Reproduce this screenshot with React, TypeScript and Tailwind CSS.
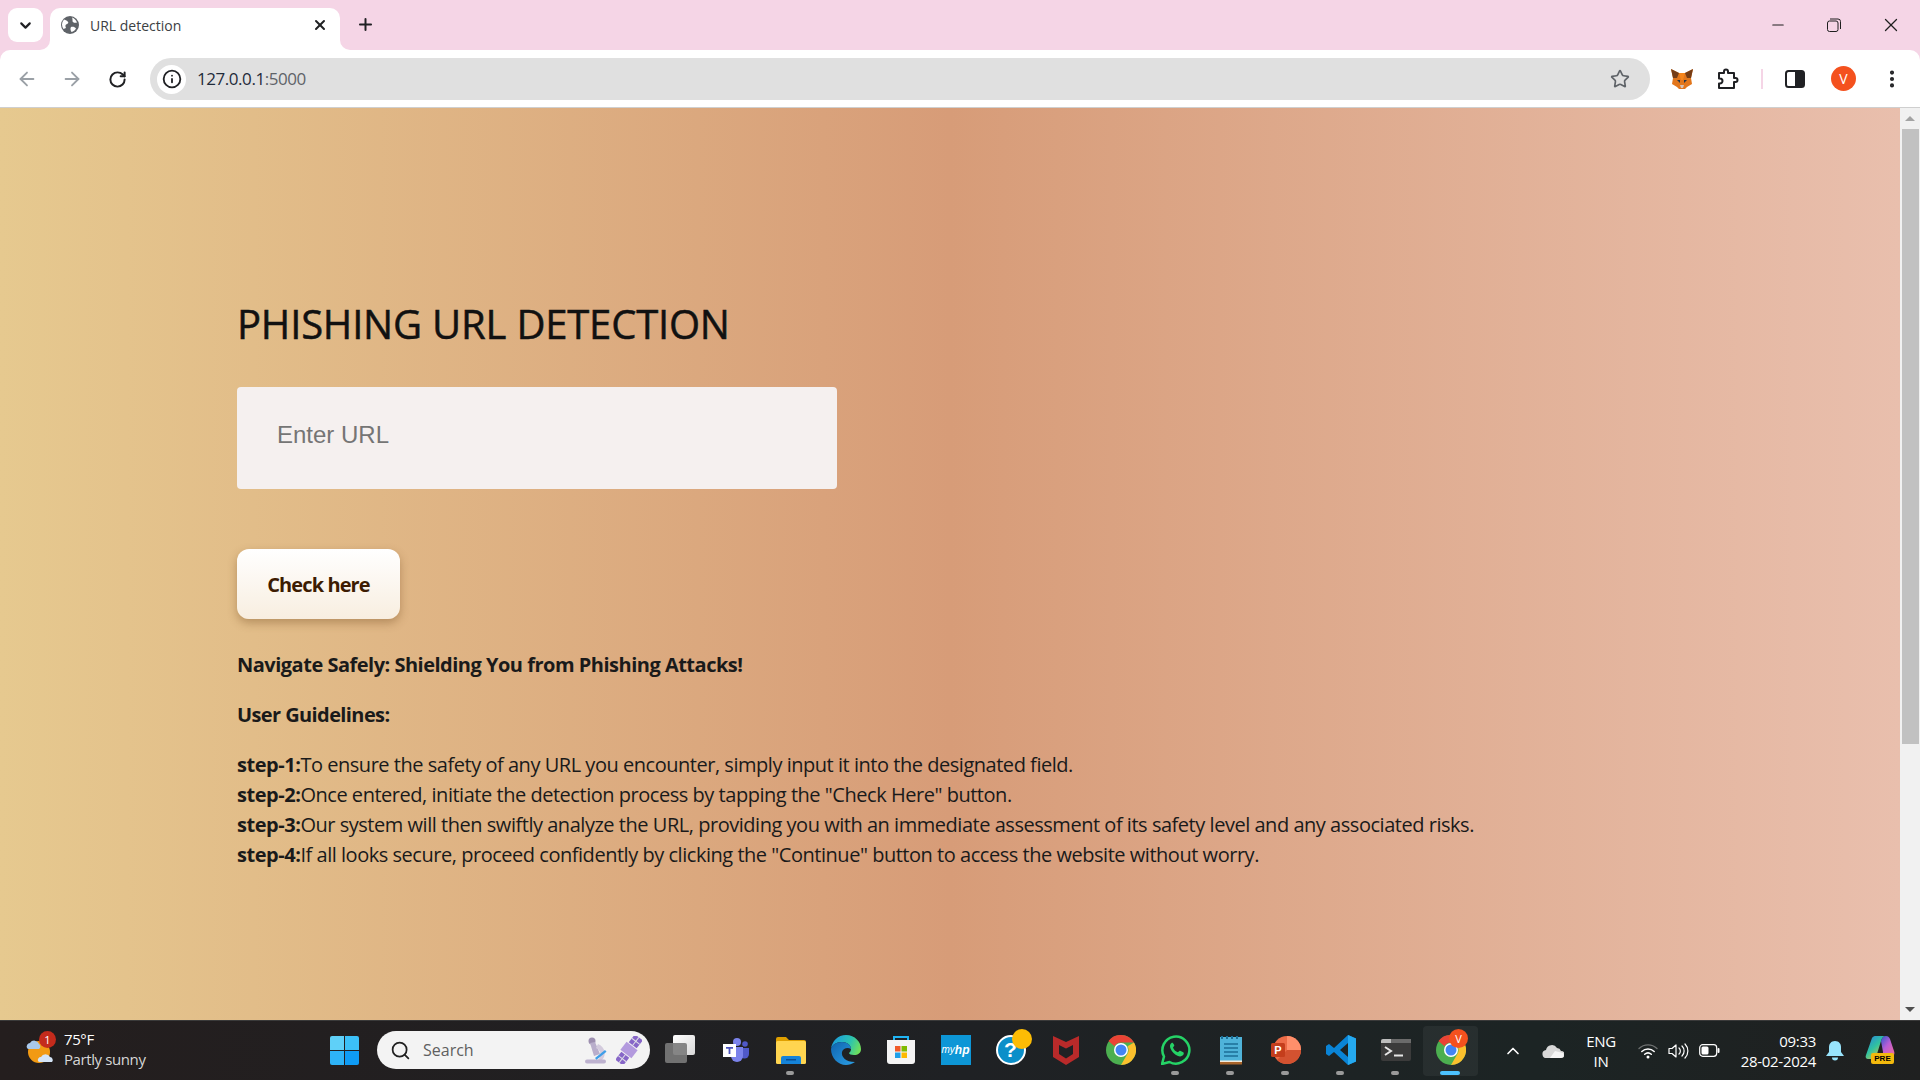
import * as React from 'react';
import { ArrowLeft, ArrowRight, ChevronDown, ChevronUp, EllipsisVertical, Info, Minus, Plus, RotateCw, Search, Star, X } from 'lucide-react';

const Segoe = "font-['Open_Sans','Noto_Sans',sans-serif]";

const GlobeIcon = () => (
  <svg width="18" height="18" viewBox="0 0 18 18">
    <circle cx="9" cy="9" r="9" fill="#5f6368" />
    <path d="M3 3.500c2 .5 3 1 4 2.500 1 1.200-1 2-2 2.500-1 1-.5 2.500 0 3.500L2.500 13A8 8 0 0 1 3 3.500zM11 1.500c2.500 1 4 2.500 5 5-1.500.5-3 .5-4-.5-1-1 0-3-1-4.500zM10 11c2-.5 4 0 5 1.500-1 2-2.500 3-4.500 3.500-1-1.500-1.500-3.500-.5-5z" fill="#ffffff" />
  </svg>
);

const FoxIcon = () => (
  <svg width="22" height="20" viewBox="0 0 22 20">
    <polygon points="0,0 8,4 14,4 22,0 20,9 21,15 16,18 14,20 8,20 6,18 1,15 2,9" fill="#e2761b" />
    <polygon points="0,0 8,4 6,9 2,9" fill="#763d16" />
    <polygon points="22,0 14,4 16,9 20,9" fill="#763d16" />
    <polygon points="6,11 9,11 9,14" fill="#233447" />
    <polygon points="16,11 13,11 13,14" fill="#233447" />
    <polygon points="9,16 13,16 12,19 10,19" fill="#d7c1b3" />
    <polygon points="8,4 14,4 12,11 10,11" fill="#f6851b" />
  </svg>
);

const PuzzleIcon = () => (
  <svg width="22" height="22" viewBox="0 0 22 22" fill="none" stroke="#202124" strokeWidth="2" strokeLinejoin="round">
    <path d="M2 5h5V3.500a2 2 0 0 1 4 0V5h6v5h1.500a2 2 0 0 1 0 4H17v6H2v-4.500h1a2.500 2.500 0 0 0 0-5H2z" />
  </svg>
);

const SidePanelIcon = () => (
  <svg width="20" height="18" viewBox="0 0 20 18">
    <rect x="1" y="1" width="18" height="16" rx="2.500" fill="none" stroke="#202124" strokeWidth="2" />
    <rect x="10" y="1" width="9" height="16" rx="1" fill="#202124" />
  </svg>
);

const RestoreIcon = () => (
  <svg width="14" height="14" viewBox="0 0 14 14" fill="none" stroke="#1f1f1f" strokeWidth="1">
    <rect x="0.500" y="3" width="10.500" height="10.500" rx="2" />
    <path d="M3 1h8a2.500 2.500 0 0 1 2.500 2.500V11" />
  </svg>
);

const WeatherIcon = () => (
  <svg width="32" height="34" viewBox="0 0 32 34">
    <circle cx="15" cy="18" r="11" fill="#f29a13" />
    <path d="M3 14a3.500 3.500 0 0 1 3-5 5 5 0 0 1 9 1 3 3 0 0 1 0 5H5a2 2 0 0 1-2-1z" fill="#a9c9ec" />
    <path d="M14 27a3 3 0 0 1 3-4 5 5 0 0 1 9 0 3 3 0 0 1 2 5H16a2 2 0 0 1-2-1z" fill="#d5e5f7" />
  </svg>
);

const WindowsIcon = () => (
  <div className="grid grid-cols-2 gap-[1.500px] w-[29px] h-[29px]">
    <div className="rounded-tl-[2px] bg-[#5fd0f8]" />
    <div className="rounded-tr-[2px] bg-[#3cc0f7]" />
    <div className="rounded-bl-[2px] bg-[#2eb3f7]" />
    <div className="rounded-br-[2px] bg-[#0f9cf5]" />
  </div>
);

const MicroscopeIcon = () => (
  <svg width="25" height="27" viewBox="0 0 25 27">
    <circle cx="8" cy="4" r="3.500" fill="#9d8fb0" />
    <path d="M6 6l5-1 5 12-6 2z" fill="#b9aecb" />
    <path d="M14 7c7 3 9 11 4 16h-4c4-4 3-10-2-12z" fill="#d3cbdd" />
    <rect x="1" y="22.500" width="21" height="4" rx="2" fill="#bdb2cf" />
    <path d="M11 21l10-8 1.500 1.800-10 8z" fill="#3f9fe8" />
  </svg>
);

const SatelliteIcon = () => (
  <svg width="26" height="28" viewBox="0 0 26 28">
    <g transform="rotate(38 13 14)">
      <rect x="8" y="-2" width="10" height="10" fill="#8766c8" />
      <rect x="8" y="20" width="10" height="10" fill="#8766c8" />
      <rect x="6" y="9" width="14" height="10" fill="#b39ade" />
      <path d="M8 3h10M13 -2v10M8 25h10M13 20v10" stroke="#dfe0e6" strokeWidth="1" />
    </g>
  </svg>
);

const TaskViewIcon = () => (
  <div className="relative w-[31px] h-[29px]">
    <div className="absolute left-[8px] top-0 w-[22px] h-[20px] rounded-[2px] bg-gradient-to-br from-white to-[#d8d8d8]" />
    <div className="absolute left-0 top-[8px] w-[22px] h-[20px] rounded-[2px] bg-[#7a7a7a]/90" />
  </div>
);

const TeamsIcon = () => (
  <svg width="28" height="24" viewBox="0 0 28 24">
    <circle cx="23" cy="6" r="2.800" fill="#5059c9" />
    <path d="M18 10h9v6a4.500 4.500 0 0 1-9 0z" fill="#5059c9" />
    <circle cx="15" cy="4" r="4" fill="#7b83eb" />
    <path d="M9 9h12v9a6 6 0 0 1-12 0z" fill="#7b83eb" />
    <rect x="1" y="6" width="13" height="13" fill="#ffffff" />
    <path d="M4 9h7v1.700H8.400V16H6.600v-5.300H4z" fill="#4b53bc" />
  </svg>
);

const ExplorerIcon = () => (
  <svg width="30" height="28" viewBox="0 0 30 28">
    <path d="M0 3a2 2 0 0 1 2-2h8l3 3h15a2 2 0 0 1 2 2v4H0z" fill="#e0a000" />
    <rect x="0" y="5" width="30" height="23" rx="1.500" fill="#ffd550" />
    <path d="M5 28v-6a2 2 0 0 1 2-2h16a2 2 0 0 1 2 2v6z" fill="#1583d8" />
    <rect x="10" y="23" width="10" height="1.500" fill="#0a4f93" />
  </svg>
);

const EdgeIcon = () => (
  <svg width="30" height="30" viewBox="0 0 30 30">
    <defs>
      <linearGradient id="edgeTop" x1="0" y1="0.300" x2="1" y2="0.600">
        <stop offset="0" stopColor="#1a9be0" />
        <stop offset="0.600" stopColor="#2cc3b0" />
        <stop offset="1" stopColor="#6fe05a" />
      </linearGradient>
      <linearGradient id="edgeLow" x1="0" y1="0" x2="1" y2="1">
        <stop offset="0" stopColor="#0f63ae" />
        <stop offset="1" stopColor="#2b9fe6" />
      </linearGradient>
    </defs>
    <path d="M0 14C1 6 7 0 15 0c9 0 15 7 15 14 0 4-3 6-7 6-3 0-5-1-5-2 1-1 2-2 2-4 0-4-4-7-9-7C5 7 1 10 0 14z" fill="url(#edgeTop)" />
    <path d="M0 14C1 10 5 7 11 7c5 0 9 3 9 7-3-2-8-1-9 3-1 5 4 10 13 10-3 2-6 3-9 3C7 30 0 23 0 14z" fill="url(#edgeLow)" />
  </svg>
);

const StoreIcon = () => (
  <svg width="30" height="30" viewBox="0 0 30 30">
    <path d="M8 6V2h14v4" fill="none" stroke="#20b5f4" strokeWidth="2" />
    <path d="M1 5h28v21a3 3 0 0 1-3 3H4a3 3 0 0 1-3-3z" fill="#f4f4f4" />
    <rect x="9" y="11" width="5.500" height="5.500" fill="#f05a28" />
    <rect x="15.500" y="11" width="5.500" height="5.500" fill="#7fba00" />
    <rect x="9" y="17.500" width="5.500" height="5.500" fill="#1e9fe8" />
    <rect x="15.500" y="17.500" width="5.500" height="5.500" fill="#fdb900" />
  </svg>
);

const MyHpIcon = () => (
  <div className="flex items-center justify-center w-[30px] h-[30px] bg-[#0d96d6] text-white text-[10px] italic font-['Liberation_Sans',sans-serif]">
    my<span className="font-bold text-[12px]">hp</span>
  </div>
);

const HelpIcon = () => (
  <div className="relative w-[30px] h-[30px] mt-[1px]">
    <div className="flex items-center justify-center w-[30px] h-[30px] rounded-full border-2 border-white bg-[#0b8fc9] text-white text-[21px] font-bold font-['Liberation_Sans',sans-serif]">?</div>
    <div className="absolute -top-[6px] left-[16px] w-[20px] h-[20px] rounded-full bg-[#fcbc05]" />
  </div>
);

const McAfeeIcon = () => (
  <svg width="28" height="30" viewBox="0 0 28 30">
    <path d="M1 1l13 6 13-6v21l-13 8-13-8z" fill="#b92a2a" />
    <path d="M7 10l7 3.500 7-3.500v9l-7 4.500-7-4.500z" fill="#1f2124" />
  </svg>
);

const ChromeIcon = () => (
  <svg width="30" height="30" viewBox="0 0 30 30">
    <circle cx="15" cy="15" r="15" fill="#4caf50" />
    <path d="M15 0a15 15 0 0 1 13 7.500H15a7.500 7.500 0 0 0-6.500 3.750L2.500 6A15 15 0 0 1 15 0z" fill="#ea4335" />
    <path d="M28 7.500A15 15 0 0 1 15 30l6.500-11.250A7.500 7.500 0 0 0 21.500 11.250z" fill="#fbc02d" />
    <circle cx="15" cy="15" r="7" fill="#ffffff" />
    <circle cx="15" cy="15" r="5.500" fill="#4285f4" />
  </svg>
);

const WhatsappIcon = () => (
  <svg width="30" height="30" viewBox="0 0 30 30">
    <path d="M1 29l2-7.500A13.500 13.500 0 1 1 8.500 27z" fill="none" stroke="#25d366" strokeWidth="2.500" strokeLinejoin="round" />
    <path d="M10.500 8c-1.500 1-2 3-1 5.500 1.500 3.500 4 6 7.500 7.500 2.500 1 4.500 0 5.500-1.500.5-1 .3-2-.3-2.300l-3-1.400c-.6-.2-1 0-1.400.6-.4.600-1 1-1.600.7-1.800-.8-3.200-2.200-4-4-.3-.6.1-1.200.6-1.600.5-.4.6-.8.4-1.400L11.900 8c-.3-.5-.9-.5-1.400 0z" fill="#25d366" />
  </svg>
);

const NotepadIcon = () => (
  <svg width="24" height="30" viewBox="0 0 24 30">
    <rect x="1" y="2" width="22" height="27" fill="#4fb3d9" />
    <rect x="1" y="27" width="22" height="2.500" fill="#a8642a" />
    <rect x="1" y="25.500" width="22" height="1.500" fill="#f1e9db" />
    <path d="M5 9h14M5 13h14M5 17h14M5 21h14" stroke="#1c6f97" strokeWidth="1.600" />
    <path d="M3 1v3M8 1v3M13 1v3M18 1v3" stroke="#1c6f97" strokeWidth="2" />
  </svg>
);

const PowerPointIcon = () => (
  <svg width="30" height="28" viewBox="0 0 30 28">
    <circle cx="16" cy="14" r="14" fill="#ed6c47" />
    <path d="M16 0a14 14 0 0 1 14 14H16z" fill="#ff8f6b" />
    <path d="M16 14h14a14 14 0 0 1-14 14 14 14 0 0 1-10-4z" fill="#d35230" />
    <rect x="0" y="7" width="14" height="14" rx="1.500" fill="#c43e1c" />
    <text x="7" y="18" textAnchor="middle" fill="#ffffff" fontSize="11" fontWeight="700" fontFamily="Liberation Sans">P</text>
  </svg>
);

const VsCodeIcon = () => (
  <svg width="30" height="30" viewBox="0 0 30 30">
    <path d="M22 0l8 3.500v23L22 30 8 17l-5 4-3-2v-8l3-2 5 4zM22 8l-8 7 8 7z" fill="#0a84d6" />
    <path d="M22 0l8 3.500v23L22 30z" fill="#25a9ef" />
  </svg>
);

const TerminalIcon = () => (
  <svg width="30" height="22" viewBox="0 0 30 22">
    <rect x="0" y="0" width="30" height="22" rx="2" fill="#3b3b3b" />
    <path d="M0 2a2 2 0 0 1 2-2h8v4H0z" fill="#bdbdbd" />
    <rect x="10" y="0" width="20" height="4" fill="#6b6b6b" />
    <path d="M4 8l6 4-6 4" fill="none" stroke="#e6e6e6" strokeWidth="2" />
    <rect x="13" y="15.500" width="9" height="2" fill="#e6e6e6" />
  </svg>
);

const OneDriveIcon = () => (
  <svg width="22" height="14" viewBox="0 0 22 14">
    <path d="M5 14a4 4 0 0 1-1-8 6 6 0 0 1 11-2 4.500 4.500 0 0 1 4 3 3.500 3.500 0 0 1 0 7z" fill="#d8d8d8" />
    <path d="M8 14l5-7 8 2a3 3 0 0 1-2 5z" fill="#f5f5f5" />
  </svg>
);

const WifiIcon = () => (
  <svg width="20" height="16" viewBox="0 0 20 16" fill="none" strokeLinecap="round">
    <path d="M1 5.500a13 13 0 0 1 18 0" stroke="#6f7272" strokeWidth="1.300" />
    <path d="M3.800 8.500a9 9 0 0 1 12.400 0M6.700 11.300a5 5 0 0 1 6.600 0" stroke="#ffffff" strokeWidth="1.500" />
    <circle cx="10" cy="14" r="1.500" fill="#ffffff" />
  </svg>
);

const VolumeIcon = () => (
  <svg width="21" height="16" viewBox="0 0 21 16" fill="none" stroke="#ffffff" strokeWidth="1.200" strokeLinecap="round">
    <path d="M1 5.500h3L8 2v12l-4-3.500H1z" strokeLinejoin="round" />
    <path d="M11 5a4 4 0 0 1 0 6M14 3a7 7 0 0 1 0 10M17 1a10 10 0 0 1 0 14" />
  </svg>
);

const BatteryIcon = () => (
  <svg width="21" height="13" viewBox="0 0 21 13">
    <rect x="0.700" y="0.700" width="17" height="11.600" rx="3" fill="none" stroke="#ffffff" strokeWidth="1.200" />
    <rect x="2.500" y="2.500" width="7" height="8" rx="1.500" fill="#ffffff" />
    <rect x="18.500" y="4" width="2" height="5" rx="1" fill="#ffffff" />
  </svg>
);

const BellIcon = () => (
  <svg width="18" height="20" viewBox="0 0 18 20">
    <path d="M9 0c4 0 6 3 6 6v5l3 4H0l3-4V6c0-3 2-6 6-6z" fill="#98e4fc" />
    <path d="M6 16.500h6a3 3 0 0 1-6 0z" fill="#98e4fc" />
  </svg>
);

const CopilotIcon = () => (
  <div className="relative w-[30px] h-[30px]">
    <svg width="30" height="24" viewBox="0 0 30 24">
      <defs>
        <linearGradient id="copA" x1="0" y1="0" x2="0.800" y2="1">
          <stop offset="0" stopColor="#2a7fe0" />
          <stop offset="0.500" stopColor="#2fc2a0" />
          <stop offset="1" stopColor="#f5c733" />
        </linearGradient>
        <linearGradient id="copB" x1="0" y1="0" x2="1" y2="1">
          <stop offset="0" stopColor="#1b57c8" />
          <stop offset="0.500" stopColor="#b85ed6" />
          <stop offset="1" stopColor="#f36c9b" />
        </linearGradient>
      </defs>
      <path d="M7 2c1-1.500 2-2 4-2h10c-3 0-4 2-5 5l-4 13c-1 3-2 5-5 5H3c-2 0-3-2-2-4z" fill="url(#copA)" />
      <path d="M16 5c1-3 2-5 5-5 2 0 3 1 4 3l4 12c1 3 0 5-3 5H14c3 0 4-2 4-4z" fill="url(#copB)" />
    </svg>
    <div className="absolute left-[6px] top-[17px] w-[23px] h-[11px] rounded-[2px] bg-[#f3b90d] text-[8px] leading-[11px] font-bold text-center text-black font-['Liberation_Sans',sans-serif]">PRE</div>
  </div>
);

const TaskButton = ({ children, dot, active }: { children: React.ReactNode; dot?: boolean; active?: boolean }) => (
  <div className={`relative flex items-center justify-center w-[55px] h-[50px] pb-[2px] rounded-[4px] ${active ? 'bg-white/5' : ''}`}>
    {children}
    {dot && <div className="absolute bottom-[1px] left-[23px] w-[8px] h-[4px] rounded-full bg-[#9a9a9a]" />}
    {active && <div className="absolute bottom-[1px] left-[17px] w-[20px] h-[4px] rounded-full bg-[#4cc2ff]" />}
  </div>
);

const steps = [
  ['step-1:', 'To ensure the safety of any URL you encounter, simply input it into the designated field.'],
  ['step-2:', 'Once entered, initiate the detection process by tapping the "Check Here" button.'],
  ['step-3:', 'Our system will then swiftly analyze the URL, providing you with an immediate assessment of its safety level and any associated risks.'],
  ['step-4:', 'If all looks secure, proceed confidently by clicking the "Continue" button to access the website without worry.'],
];

export default function App() {
  return (
    <div className={`flex flex-col w-[1920px] h-[1080px] overflow-hidden ${Segoe}`}>
      {/* tab strip */}
      <div className="flex items-end h-[50px] bg-[#f5d5e6] pl-[8px] shrink-0">
        <div className="flex items-center justify-center w-[35px] h-[34px] mb-[8px] rounded-[9px] bg-white">
          <ChevronDown size={17} strokeWidth={3} color="#202124" />
        </div>
        <div className="relative flex items-center w-[290px] h-[42px] ml-[7px] pl-[11px] pr-[12px] pb-[8px] rounded-t-[10px] bg-white">
          <div className="absolute -left-[10px] bottom-0 w-[10px] h-[10px] bg-white">
            <div className="w-[10px] h-[10px] rounded-br-[10px] bg-[#f5d5e6]" />
          </div>
          <div className="absolute -right-[10px] bottom-0 w-[10px] h-[10px] bg-white">
            <div className="w-[10px] h-[10px] rounded-bl-[10px] bg-[#f5d5e6]" />
          </div>
          <GlobeIcon />
          <span className="ml-[11px] text-[14px] text-[#3c4043]">URL detection</span>
          <X size={16} strokeWidth={3} color="#202124" className="ml-auto" />
        </div>
        <div className="flex items-center justify-center w-[30px] h-[30px] ml-[10px] mb-[11px]">
          <Plus size={19} strokeWidth={2.500} color="#202124" />
        </div>
        <div className="flex items-center ml-auto h-[50px] text-[#1f1f1f]">
          <div className="flex items-center justify-center w-[56px] ml-[1px]"><Minus size={18} strokeWidth={1.400} /></div>
          <div className="flex items-center justify-center w-[56px]"><RestoreIcon /></div>
          <div className="flex items-center justify-center w-[58px]"><X size={22} strokeWidth={1.400} /></div>
        </div>
      </div>

      {/* toolbar */}
      <div className="h-[58px] bg-[#f5d5e6] shrink-0">
        <div className="flex items-center w-full h-[58px] pt-[1px] rounded-t-[10px] bg-white border-b border-[#cfcfcf] pl-[16px]">
          <ArrowLeft size={22} strokeWidth={2} color="#9aa0a6" />
          <ArrowRight size={22} strokeWidth={2} color="#9aa0a6" className="ml-[23px]" />
          <RotateCw size={19} strokeWidth={2.500} color="#202124" className="ml-[25px]" />
          <div className="flex items-center w-[1500px] h-[42px] ml-[23px] pl-[7px] pr-[20px] rounded-full bg-[#e0e0e0]">
            <div className="flex items-center justify-center w-[29px] h-[29px] rounded-full bg-white">
              <Info size={20} strokeWidth={2.200} color="#202124" />
            </div>
            <span className="ml-[11px] text-[17px] tracking-[-0.45px] text-[#1f2b3a]">127.0.0.1<span className="text-[#5f6368]">:5000</span></span>
            <Star size={20} strokeWidth={2} color="#5f6368" className="ml-auto" />
          </div>
          <div className="ml-[21px]"><FoxIcon /></div>
          <div className="ml-[24px]"><PuzzleIcon /></div>
          <div className="w-[2px] h-[20px] ml-[22px] bg-[#f5d5e6]" />
          <div className="ml-[22px]"><SidePanelIcon /></div>
          <div className="flex items-center justify-center w-[25px] h-[25px] ml-[26px] mb-[1px] rounded-full bg-[#f4511e] text-white text-[14px]">V</div>
          <EllipsisVertical size={22} strokeWidth={2.500} color="#202124" className="ml-[25px]" />
        </div>
      </div>

      {/* page + scrollbar */}
      <div className="flex h-[912px] shrink-0">
        <div className="flex-1 pl-[237px] pt-[186px] bg-[linear-gradient(to_right,#e6c98f,#d79c78_50%,#e9bfad)] text-[20px] leading-[30px] text-[#1a1a1a]">
          <h1 className="text-[40px] leading-[60px] font-medium tracking-[-0.2px] text-[#111111] [-webkit-text-stroke:0.5px_#111111]">PHISHING URL DETECTION</h1>
          <input
            className="block w-[600px] h-[102px] mt-[33px] pl-[40px] pb-[6px] rounded-[4px] bg-[#f5f0ef] text-[24px] font-['Liberation_Sans',sans-serif] placeholder:text-[#757575] outline-none"
            type="text"
            placeholder="Enter URL"
          />
          <button className="block w-[163px] h-[70px] pt-[2px] mt-[60px] rounded-[12px] bg-gradient-to-b from-white to-[#f8eee0] shadow-[0_4px_10px_rgba(100,60,20,0.35)] text-[20px] font-bold tracking-[-0.9px] text-[#3d1c02]" type="button">
            Check here
          </button>
          <p className="mt-[31px] font-bold tracking-[-0.5px]">Navigate Safely: Shielding You from Phishing Attacks!</p>
          <p className="mt-[20px] font-bold tracking-[-0.6px]">User Guidelines:</p>
          <div className="mt-[20px] tracking-[-0.47px]">
            {steps.map(([label, text]) => (
              <p key={label}><b>{label}</b>{text}</p>
            ))}
          </div>
        </div>
        <div className="flex flex-col items-center w-[20px] bg-[#f1f1f1]">
          <div className="w-0 h-0 mt-[8px] border-x-[5px] border-b-[5px] border-x-transparent border-b-[#a3a3a3]" />
          <div className="w-[17px] h-[615px] mt-[8px] bg-[#c1c1c1]" />
          <div className="w-0 h-0 mt-auto mb-[8px] border-x-[5px] border-t-[5px] border-x-transparent border-t-[#505050]" />
        </div>
      </div>

      {/* taskbar */}
      <div className="flex items-center h-[60px] shrink-0 border-t border-[#3a3a3a] bg-[linear-gradient(to_right,#241e1e,#1f2124_50%,#1c2424_80%,#1f2020)] text-white pl-[24px]">
        <div className="relative w-[32px] h-[34px]">
          <WeatherIcon />
          <div className="absolute left-[15px] -top-[3px] w-[17px] h-[17px] rounded-full bg-[#c42b1c] text-[11px] leading-[17px] text-center">1</div>
        </div>
        <div className="ml-[8px] w-[100px] pb-[4px] text-[15px] leading-[20px] tracking-[-0.4px]">
          <div>75°F</div>
          <div className="text-[#d6d6d6]">Partly sunny</div>
        </div>
        <div className="flex items-center justify-center w-[55px] h-[50px] ml-[153px]"><WindowsIcon /></div>
        <div className="flex items-center w-[273px] h-[38px] ml-[5px] mb-[1px] pl-[13px] pr-[6px] rounded-full bg-[#f3f3f3] text-[#5f5f5f] text-[16px]">
          <Search size={21} strokeWidth={2} color="#202020" />
          <span className="ml-[12px]">Search</span>
          <div className="flex items-center ml-auto gap-[7px] pr-[2px]"><MicroscopeIcon /><SatelliteIcon /></div>
        </div>
        <div className="flex items-center ml-[3px]">
          <TaskButton><TaskViewIcon /></TaskButton>
          <TaskButton><TeamsIcon /></TaskButton>
          <TaskButton dot><ExplorerIcon /></TaskButton>
          <TaskButton><EdgeIcon /></TaskButton>
          <TaskButton><StoreIcon /></TaskButton>
          <TaskButton><MyHpIcon /></TaskButton>
          <TaskButton><HelpIcon /></TaskButton>
          <TaskButton><McAfeeIcon /></TaskButton>
          <TaskButton><ChromeIcon /></TaskButton>
          <TaskButton dot><WhatsappIcon /></TaskButton>
          <TaskButton dot><NotepadIcon /></TaskButton>
          <TaskButton dot><PowerPointIcon /></TaskButton>
          <TaskButton dot><VsCodeIcon /></TaskButton>
          <TaskButton dot><TerminalIcon /></TaskButton>
          <TaskButton active>
            <ChromeIcon />
            <div className="absolute left-[26px] top-[3px] w-[19px] h-[19px] rounded-full bg-[#f4511e] text-[11px] leading-[19px] text-center">V</div>
          </TaskButton>
        </div>
        <ChevronUp size={20} strokeWidth={2} className="ml-[25px]" />
        <div className="ml-[19px]"><OneDriveIcon /></div>
        <div className="ml-[12px] w-[50px] text-center text-[15px] leading-[20px] tracking-[-0.3px]">ENG<br />IN</div>
        <div className="ml-[12px]"><WifiIcon /></div>
        <div className="ml-[10px]"><VolumeIcon /></div>
        <div className="ml-[10px]"><BatteryIcon /></div>
        <div className="ml-[14px] w-[82px] text-right text-[15px] leading-[20px] tracking-[-0.3px]">09:33<br />28-02-2024</div>
        <div className="ml-[10px]"><BellIcon /></div>
        <div className="ml-[21px]"><CopilotIcon /></div>
      </div>
    </div>
  );
}
